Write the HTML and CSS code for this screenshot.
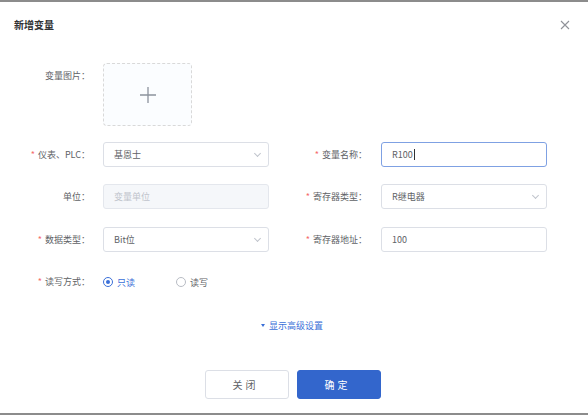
FILE: index.html
```html
<!DOCTYPE html>
<html lang="zh">
<head>
<meta charset="utf-8">
<link rel="stylesheet" href="styles.css">
</head>
<body>
<div class="dialog">
  <div class="header">
    <span class="title">新增变量</span>
    <svg class="close" width="10" height="10" viewBox="0 0 10 10"><path d="M1 1L9 9M9 1L1 9" stroke="#909399" stroke-width="1.1" fill="none"/></svg>
  </div>
  <div class="form">
    <div class="row row-upload">
      <div class="label">变量图片：</div>
      <div class="upload">
        <svg width="18" height="18" viewBox="0 0 18 18"><path d="M9 1V17M1 9H17" stroke="#8c939d" stroke-width="1.3" fill="none"/></svg>
      </div>
    </div>
    <div class="row">
      <div class="label"><span class="req">*</span>仪表、PLC：</div>
      <div class="control select"><span class="val">基恩士</span><span class="arrow"></span></div>
      <div class="label label2"><span class="req">*</span>变量名称：</div>
      <div class="control input focus"><span class="val">R100</span><span class="caret"></span></div>
    </div>
    <div class="row">
      <div class="label">单位：</div>
      <div class="control input disabled"><span class="ph">变量单位</span></div>
      <div class="label label2"><span class="req">*</span>寄存器类型：</div>
      <div class="control select"><span class="val">R继电器</span><span class="arrow"></span></div>
    </div>
    <div class="row">
      <div class="label"><span class="req">*</span>数据类型：</div>
      <div class="control select"><span class="val">Bit位</span><span class="arrow"></span></div>
      <div class="label label2"><span class="req">*</span>寄存器地址：</div>
      <div class="control input"><span class="val">100</span></div>
    </div>
    <div class="row">
      <div class="label"><span class="req">*</span>读写方式：</div>
      <div class="radios">
        <span class="radio checked"><span class="dot"></span>只读</span>
        <span class="radio"><span class="dot"></span>读写</span>
      </div>
    </div>
    <div class="advanced"><span class="tri"></span>显示高级设置</div>
  </div>
  <div class="footer">
    <button class="btn">关闭</button>
    <button class="btn primary">确定</button>
  </div>
</div>
</body>
</html>
```
FILE: styles.css
```css
* { box-sizing: border-box; }
html, body { margin: 0; padding: 0; }
body {
  width: 588px;
  height: 415px;
  background: #8c8c8c;
  padding-top: 2px;
  font-family: "Noto Sans CJK SC", "Liberation Sans", sans-serif;
  overflow: hidden;
}
.dialog {
  background: #fff;
  height: 411px;
  position: relative;
}
.header {
  height: 50px;
  padding: 15px 14px 0;
  display: flex;
  justify-content: space-between;
}
.title {
  font-size: 10px;
  font-weight: bold;
  color: #303133;
  line-height: 16px;
}
.close { margin-top: 3px; margin-right: 4px; }
.form { padding-top: 11px; }
.row {
  display: flex;
  align-items: flex-start;
  height: 25px;
  margin-bottom: 17px;
}
.row-upload { height: 63px; margin-bottom: 16px; }
.row:nth-child(3) { margin-bottom: 18px; }
.label {
  width: 103px;
  padding-right: 13px;
  text-align: right;
  font-size: 9px;
  color: #606266;
  line-height: 25px;
  flex-shrink: 0;
}
.label2 { width: 112px; padding-right: 14px; }
.req { color: #f56c6c; margin-right: 3px; }
.upload {
  width: 89px;
  height: 63px;
  border: 1px dashed #d9d9d9;
  border-radius: 4px;
  background: #fbfdff;
  display: flex;
  align-items: center;
  justify-content: center;
}
.control {
  width: 166px;
  height: 25px;
  border: 1px solid #dcdfe6;
  border-radius: 3px;
  padding-left: 10px;
  display: flex;
  align-items: center;
  font-size: 9px;
  color: #606266;
  position: relative;
}
.control.focus { border-color: #7fa1e3; }
.control.disabled { background: #f5f7fa; border-color: #e4e7ed; }
.ph { color: #c0c4cc; }
.caret {
  width: 1px;
  height: 11px;
  background: #303133;
  margin-left: 1px;
}
.arrow {
  position: absolute;
  right: 8px;
  top: 8px;
  width: 5px;
  height: 5px;
  border-right: 1px solid #c0c4cc;
  border-bottom: 1px solid #c0c4cc;
  transform: rotate(45deg);
}
.radios {
  display: flex;
  align-items: center;
  height: 26px;
  font-size: 9px;
  color: #606266;
}
.radio { display: flex; align-items: center; width: 73px; }
.dot {
  width: 10px;
  height: 10px;
  border: 1px solid #b8bcc4;
  border-radius: 50%;
  margin-right: 4px;
  position: relative;
}
.radio.checked { color: #3a6fd8; }
.radio.checked .dot { border-color: #3a6fd8; }
.radio.checked .dot::after {
  content: "";
  position: absolute;
  left: 2px; top: 2px;
  width: 4px; height: 4px;
  border-radius: 50%;
  background: #3a6fd8;
}
.advanced {
  margin-top: 25px;
  text-align: center;
  font-size: 9px;
  color: #3a6fd8;
  line-height: 14px;
  padding-right: 4px;
}
.tri {
  display: inline-block;
  width: 0; height: 0;
  border-left: 2.5px solid transparent;
  border-right: 2.5px solid transparent;
  border-top: 3px solid #3a6fd8;
  vertical-align: middle;
  margin-right: 4px;
  margin-top: -2px;
}
.footer {
  position: absolute;
  left: 0; right: 0;
  top: 368px;
  display: flex;
  justify-content: center;
  gap: 8px;
  padding-right: 2px;
}
.btn {
  width: 84px;
  height: 29px;
  border: 1px solid #dcdfe6;
  border-radius: 3px;
  background: #fff;
  color: #606266;
  font-family: "Noto Sans CJK SC", sans-serif;
  font-size: 10px;
  letter-spacing: 3px;
  padding-left: 3px;
}
.btn.primary { background: #3366cc; border-color: #3366cc; color: #fff; }
```
